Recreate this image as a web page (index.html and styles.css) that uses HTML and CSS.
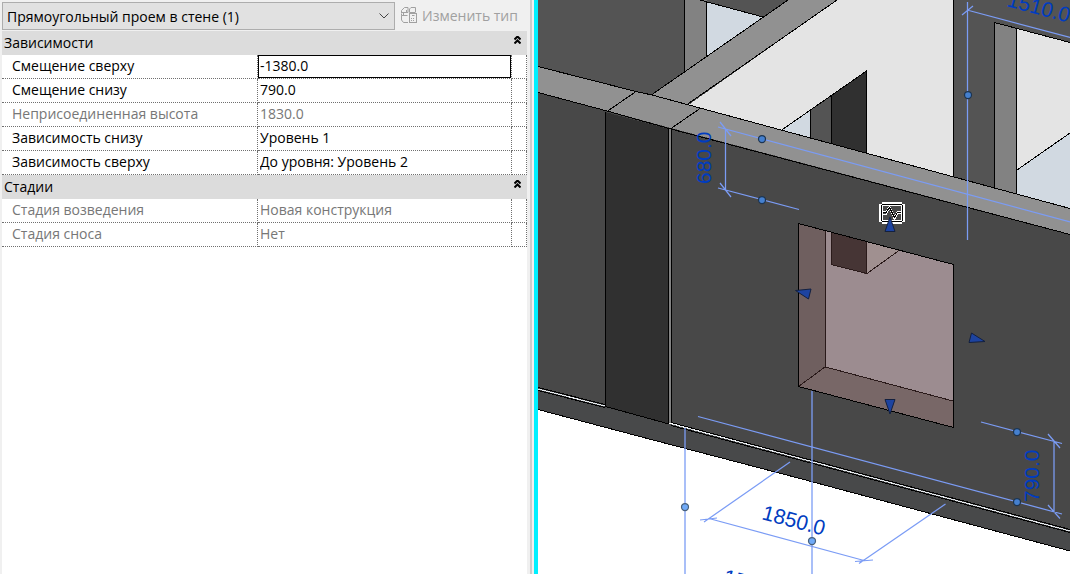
FILE: index.html
```html
<!DOCTYPE html>
<html lang="ru">
<head>
<meta charset="utf-8">
<title>Свойства</title>
<link rel="stylesheet" href="styles.css">
</head>
<body>
<main class="workspace">
  <section class="panel" aria-label="Свойства">
    <header class="panel-head">
      <select class="type-select" aria-label="Категория">
        <option>Прямоугольный проем в стене (1)</option>
      </select>
      <button class="edit-type" type="button" disabled>
        <svg class="edit-icon" viewBox="0 0 16 16" width="16" height="16" aria-hidden="true">
          <path d="M.5 6V3.500L3.500.500H7V5.500H.500M8.500 5.500V2L10 .500H14.500V5M8.500 5.500H14.500M6.500 8.500H.500V13L2.500 15.500H7M.5 8.500V6.500M2.500 8.500V6M5.500 5.500V3"/>
          <rect x="8.500" y="6.500" width="7" height="9"/>
          <path d="M11 8.500h2.500M10 11.500h1M12 11.500h1M10 13.500h1M12 13.500h1"/>
        </svg>
        <span>Изменить тип</span>
      </button>
    </header>
    <table class="props">
      <colgroup><col class="col-name"><col class="col-value"><col class="col-more"></colgroup>
      <tbody>
        <tr class="group"><th colspan="3" scope="rowgroup"><div class="group-bar"><span>Зависимости</span>
          <button class="fold" type="button" aria-label="Свернуть"><svg viewBox="0 0 7 8" width="7" height="8"><path d="M.5 3.500l3-3 3 3M.5 7.500l3-3 3 3"/></svg></button></div></th></tr>
        <tr><th scope="row"><label for="top-offset">Смещение сверху</label></th><td class="active"><input id="top-offset" class="value" value="-1380.0"></td><td></td></tr>
        <tr><th scope="row"><label for="bottom-offset">Смещение снизу</label></th><td><input id="bottom-offset" class="value" value="790.0"></td><td></td></tr>
        <tr class="locked"><th scope="row">Неприсоединенная высота</th><td>1830.0</td><td></td></tr>
        <tr><th scope="row"><label for="base">Зависимость снизу</label></th><td><input id="base" class="value" value="Уровень 1"></td><td></td></tr>
        <tr><th scope="row"><label for="top">Зависимость сверху</label></th><td><input id="top" class="value" value="До уровня: Уровень 2"></td><td></td></tr>
      </tbody>
      <tbody>
        <tr class="group"><th colspan="3" scope="rowgroup"><div class="group-bar"><span>Стадии</span>
          <button class="fold" type="button" aria-label="Свернуть"><svg viewBox="0 0 7 8" width="7" height="8"><path d="M.5 3.500l3-3 3 3M.5 7.500l3-3 3 3"/></svg></button></div></th></tr>
        <tr class="locked"><th scope="row">Стадия возведения</th><td>Новая конструкция</td><td></td></tr>
        <tr class="locked"><th scope="row">Стадия сноса</th><td>Нет</td><td></td></tr>
      </tbody>
    </table>
  </section>
  <div class="divider"></div>
  <section class="view" aria-label="3D вид">
    <svg class="scene" viewBox="538 0 532 574" preserveAspectRatio="xMinYMin slice">
      <g class="solid" shape-rendering="crispEdges">
        <path class="f-back" d="M538 0H1070V209L538 67Z"/>
        <path class="f-pillar" d="M684 0H707V60L684 74Z"/>
        <path class="f-sky" d="M707 2 763 17 707 56Z"/>
        <path class="f-room" d="M837 0H953V177L687 106Z"/>
        <path class="f-sky" d="M781 130 810 110V139Z"/>
        <path class="f-back" d="M810 110 831 96V145L810 140Z"/>
        <path class="f-dark" d="M831 96 866 71V154L831 145Z"/>
        <path class="f-pillar" d="M994 22 1017 28V195L994 189Z"/>
        <path class="f-room" d="M1017 28 1070 42V133L1017 170Z"/>
        <path class="f-sky" d="M1017 170 1070 133V209L1017 195Z"/>
        <path class="f-cap" d="M652 95 788 0H837L687 105Z"/>
        <path class="f-base" d="M538 388 606 405 671 424 1070 531V551L538 409Z"/>
        <path class="f-front" d="M538 92 671 128 1070 234V531L671 423 538 388Z"/>
        <path class="f-cap" d="M538 66 636 91 700 108 1070 208V234L671 128 538 92Z"/>
        <path class="f-dark" d="M605 112 669 129V424L605 407Z"/>
        <path class="f-pillar" d="M669 129H671V423H669Z"/>
      </g>
      <g class="edges" shape-rendering="crispEdges">
        <path d="M684.5 0V71M706.500 2V56M700 0 763 17M652 94.500 788 0M687 104.500 837 0"/>
        <path d="M538 66.500 636 91.500 652 95 687 104.500 700 108 1070 208.500"/>
        <path d="M538 92.500 607 111 669 128.500 1070 234.500M607 111.500 636 91.500M671 128.500 700 108.500"/>
        <path d="M781 130.500 866.500 71V153M810.500 110V138M831.500 96V144M953.500 0V177M994.500 188V22.500L1070 42.500M1016.500 28V193M1017 170 1070 133"/>
        <path d="M605.500 112V406.500L669 424M668.500 129V424M671.500 129V423"/>
        <path d="M538 387.500 605 404.500M538 390.500 605 407.500M671 422.500 1070 529.500M671 425.500 1070 532.500M538 409.500 653 440 800 478.500 1070 551"/>
        <path class="gap-line" d="M538 389 605 406M672 424 1070 531"/>
      </g>
      <g class="opening" shape-rendering="crispEdges">
        <path class="f-glow" d="M798 223 953 264V427L798 386Z"/>
        <path class="f-jamb" d="M798 223 825 230V367L798 386Z"/>
        <path class="f-sill" d="M798 386 825 367 953 401V427Z"/>
        <path class="f-niche" d="M831 232 866 241V274L831 264Z"/>
        <path class="f-niche-side" d="M866 241 899 250 867 274Z"/>
        <path class="inner-edge" d="M825.5 230V367L953 401M825 367 798.500 386.500M831.500 232V264.500L866.500 273.500V242M867 273.500 899 250.500"/>
        <path class="rim" d="M798.5 223.500 953.500 264.500V427.500L798.500 386.500Z"/>
      </g>
      <g class="dims">
        <path d="M718 127 1070 222M718 188 799 209.500M725.500 129V190M720 122 731 136M720 183 731 197"/>
        <path d="M967.5 2V240M967 10 1070 37.500M962 15 973 6"/>
        <path d="M698 416.500 1062 514M981 422 1062 443.500M1054 441V512M1048 434 1060 448M1048 505 1060 518.500"/>
        <path d="M790 462 704 522M700 520 717 518M709 518.500 864 560.500M855 561.500 873 560M945.500 504 859 563.500"/>
        <path class="witness" d="M685 428V574M812 391V574"/>
      </g>
      <g class="grips">
        <circle cx="762" cy="139" r="3.500"/><circle cx="762" cy="200" r="3.500"/>
        <circle cx="968" cy="95" r="3.500"/>
        <circle cx="1017" cy="432" r="3.500"/><circle cx="1017" cy="502" r="3.500"/>
        <circle class="pale" cx="685" cy="507" r="3.500"/><circle class="pale" cx="812" cy="541" r="3.500"/>
      </g>
      <g class="dim-text">
        <text transform="translate(711 184) rotate(-90)">680.0</text>
        <text transform="translate(1039 502) rotate(-90)">790.0</text>
        <text transform="translate(1006 6) rotate(15)">1510.0</text>
        <text transform="translate(761 519) rotate(15)">1850.0</text>
        <text transform="translate(722 583) rotate(15)">1510.0</text>
      </g>
      <g class="badge" shape-rendering="crispEdges">
        <path class="badge-white" d="M882 202H902V204H905V222H902V224H882V222H879V204H882Z"/>
        <rect class="badge-face" x="881.500" y="204.500" width="21" height="17" rx="2"/>
        <rect class="badge-inner" x="882.500" y="205.500" width="19" height="15"/>
        <path class="badge-trace" d="M883 214.500H886L889.500 208.500 894.500 219.500 897.500 213.500H901"/>
        <path class="badge-trace" d="M883 211.500H886L889.500 206.500 894.500 216.500 897.500 211.500H901"/>
        <path class="badge-wave" d="M883 212.500H886L889.500 207.500 894.500 217.500 897.500 212.500H901"/>
      </g>
      <g class="arrows">
        <path d="M890 217 895 231.500H885Z"/>
        <path d="M795.5 290.500 811 289 808.500 299Z"/>
        <path d="M985 341.500 971.500 333 969 342.500Z"/>
        <path d="M885 399.500H895L890 414Z"/>
      </g>
    </svg>
  </section>
</main>
</body>
</html>
```
FILE: styles.css
```css
* { box-sizing: border-box; }
body { margin: 0; font-family: "Open Sans", "Noto Sans", sans-serif; font-size: 14px; color: #000; background: #fff; }
button, select, input { font: inherit; color: inherit; }
.workspace { display: grid; grid-template-columns: 534fr 4px 532fr; height: 100vh; overflow: hidden; }

.panel { display: flex; flex-direction: column; min-width: 0; padding: 2px 7px 0 2px; background: linear-gradient(#ccc, #ccc) right 2px top / 2px 100% no-repeat #f0f0f0; }
.panel::after { content: ""; flex: 1; background: #fff; }
.panel-head { display: flex; align-items: center; gap: 6px; padding-bottom: 1px; }
.type-select { flex: 0 1 393px; min-width: 0; height: 28px; padding: 0 20px 0 4px; border: 1px solid #adadad; border-radius: 0; appearance: none;
  background: url("data:image/svg+xml,%3Csvg xmlns='http://www.w3.org/2000/svg' width='10' height='6'%3E%3Cpath d='M.5.5 5 5 9.500.5' fill='none' stroke='%23444'/%3E%3C/svg%3E") right 5px center no-repeat #e1e1e1; }
.edit-type { display: flex; align-items: center; gap: 5px; height: 24px; padding: 0 0 2px; border: 0; background: none; color: #a0a0a0; white-space: nowrap; }
.edit-icon { fill: none; stroke: #a0a0a0; }

.props { width: 100%; table-layout: fixed; border-spacing: 0; background: #fff; }
.col-name { width: 256px; }
.col-more { width: 15px; }
.props th, .props td { height: 24px; padding: 0 0 2px; font-weight: 400; text-align: left; line-height: 20px; border-bottom: 1px dotted #707070; border-right: 1px dotted #707070; white-space: nowrap; overflow: hidden; }
.props th { padding-left: 10px; }
.props td { padding-left: 2px; }
.props .group th { padding: 0 0 0 2px; background: #dcdcdc; border: 0; }
.group-bar { display: flex; justify-content: space-between; }
.fold { display: flex; padding: 3px 6px 0 0; border: 0; background: none; }
.fold svg { fill: none; stroke: #000; stroke-width: 2; }
.locked { color: #777; }
.value { display: block; width: 100%; height: 20px; padding: 0; border: 0; background: none; outline: 0; }
.props .active { padding: 0; }
.active .value { height: 23px; padding: 0 0 2px 1px; border: 1px solid #000; }

.divider { background: #00f0ff; }
.view { min-width: 0; overflow: hidden; background: #fff; }
.scene { display: block; width: 100%; height: 100%; }

.f-back { fill: #545454; }
.f-front { fill: #484848; }
.f-base { fill: #48494a; }
.f-dark { fill: #303030; }
.f-pillar { fill: #828282; }
.f-cap { fill: #919191; }
.f-room { fill: #e4e4e4; }
.f-sky { fill: #d1d9e1; }
.edges path { fill: none; stroke: #000; }
.edges .gap-line { stroke: #e6eaee; }
.f-glow { fill: #9c8c90; }
.f-jamb { fill: #6f5f5f; }
.f-sill { fill: #786767; }
.f-niche { fill: #463535; }
.f-niche-side { fill: #a09090; }
.inner-edge { fill: none; stroke: #2a1a1a; }
.rim { fill: none; stroke: #000; }
.dims path { fill: none; stroke: #7b9cf5; stroke-width: 1.25; }
.dims .witness { stroke-width: 2; opacity: .65; }
.grips circle { fill: #4580cf; stroke: #1d3450; stroke-width: 1.25; }
.grips .pale { fill: #70aaf8; stroke: #48607c; }
.dim-text { fill: #003cc0; font-family: "Liberation Sans", Arial, sans-serif; font-size: 21px; }
.badge-white { fill: #fff; }
.badge-face { fill: #484848; stroke: #000; }
.badge-inner { fill: none; stroke: #fff; }
.badge-wave { fill: none; stroke: #000; }
.badge-trace { fill: none; stroke: #fff; }
.arrows path { fill: #1d43a0; stroke: #13203f; }
```
